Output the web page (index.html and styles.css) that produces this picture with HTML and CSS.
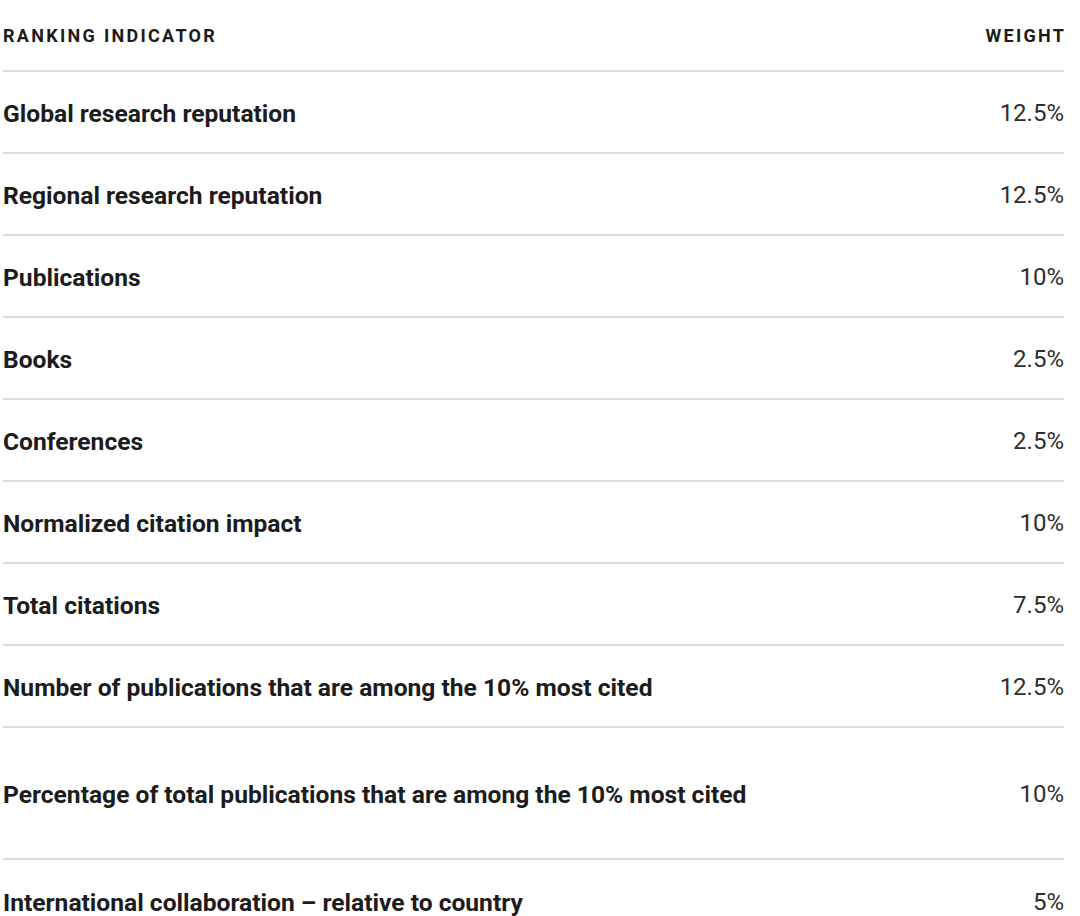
FILE: index.html
```html
<!DOCTYPE html>
<html lang="en">
<head>
<meta charset="utf-8">
<title>Ranking indicators</title>
<link rel="stylesheet" href="styles.css">
</head>
<body>
<div class="table">
  <div class="row head">
    <div class="name">Ranking indicator</div>
    <div class="weight">Weight</div>
  </div>
  <div class="row"><div class="name">Global research reputation</div><div class="weight">12.5%</div></div>
  <div class="row"><div class="name">Regional research reputation</div><div class="weight">12.5%</div></div>
  <div class="row"><div class="name">Publications</div><div class="weight">10%</div></div>
  <div class="row"><div class="name">Books</div><div class="weight">2.5%</div></div>
  <div class="row"><div class="name">Conferences</div><div class="weight">2.5%</div></div>
  <div class="row"><div class="name">Normalized citation impact</div><div class="weight">10%</div></div>
  <div class="row"><div class="name">Total citations</div><div class="weight">7.5%</div></div>
  <div class="row"><div class="name">Number of publications that are among the 10% most cited</div><div class="weight">12.5%</div></div>
  <div class="row tall"><div class="name">Percentage of total publications that are among the 10% most cited</div><div class="weight">10%</div></div>
  <div class="row"><div class="name">International collaboration – relative to country</div><div class="weight">5%</div></div>
</div>
</body>
</html>
```

FILE: styles.css
```css
html, body {
  margin: 0;
  padding: 0;
  background: #ffffff;
}
body {
  font-family: Roboto, "Liberation Sans", Arial, sans-serif;
  color: #1c1c1c;
}
.table {
  display: flex;
  flex-direction: column;
  padding: 0 16px 0 3px;
}
.row {
  display: flex;
  align-items: center;
  justify-content: space-between;
  height: 82px;
  border-bottom: 2px solid #dedede;
  box-sizing: border-box;
  padding-top: 2px;
}
.row.head {
  height: 72px;
  padding-top: 0;
}
.row.tall {
  height: 132px;
}
.row:last-child {
  border-bottom: none;
}
.name {
  font-size: 24.6px;
  font-weight: 700;
  color: #1c1c1c;
}
.weight {
  font-size: 24px;
  font-weight: 400;
  color: #2e2e2e;
}
.head .name, .head .weight {
  font-size: 18px;
  font-weight: 700;
  text-transform: uppercase;
  letter-spacing: 2.3px;
  color: #1c1c1c;
}
.head .weight {
  margin-right: -2.3px;
}
```
